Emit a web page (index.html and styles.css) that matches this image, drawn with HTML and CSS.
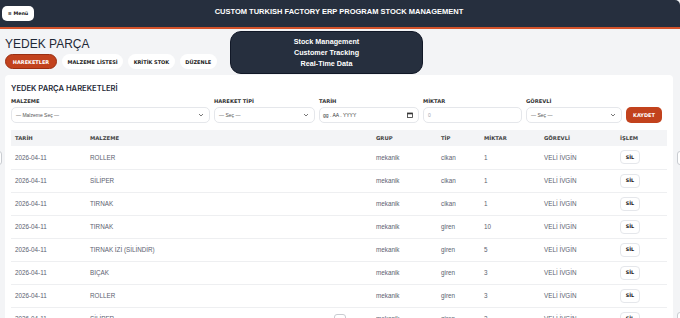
FILE: index.html
```
<!DOCTYPE html>
<html lang="tr">
<head>
<meta charset="utf-8">
<title>Yedek Parça</title>
<link rel="stylesheet" href="styles.css">
</head>
<body>
<header class="topbar">
  <button class="menu-btn">≡ Menü</button>
  <div class="topbar-title">CUSTOM TURKISH FACTORY ERP PROGRAM STOCK MANAGEMENT</div>
</header>
<div class="promo">
  <div>Stock Management</div>
  <div>Customer Tracking</div>
  <div>Real-Time Data</div>
</div>
<span class="edge edge-left"></span>
<span class="edge edge-right"></span>
<span class="edge edge-bottom"></span>
<span class="edge edge-br"></span>
<main class="page">
  <h1 class="page-title">YEDEK PARÇA</h1>
  <nav class="tabs">
    <span class="tab active">HAREKETLER</span>
    <span class="tab">MALZEME LİSTESİ</span>
    <span class="tab">KRİTİK STOK</span>
    <span class="tab">DÜZENLE</span>
  </nav>
  <section class="card">
    <h2 class="card-title">YEDEK PARÇA HAREKETLERİ</h2>
    <div class="form">
      <div class="field">
        <label>MALZEME</label>
        <div class="control"><span>— Malzeme Seç —</span><svg width="6" height="4" viewBox="0 0 6 4"><path d="M1 1l2 2 2-2" fill="none" stroke="#555" stroke-width="0.8"/></svg></div>
      </div>
      <div class="field">
        <label>HAREKET TİPİ</label>
        <div class="control"><span>— Seç —</span><svg width="6" height="4" viewBox="0 0 6 4"><path d="M1 1l2 2 2-2" fill="none" stroke="#555" stroke-width="0.8"/></svg></div>
      </div>
      <div class="field">
        <label>TARİH</label>
        <div class="control date"><span>gg . AA . YYYY</span><svg width="6" height="6" viewBox="0 0 6 6"><rect x="0.5" y="1" width="5" height="4.5" fill="none" stroke="#333" stroke-width="0.8"/><rect x="0.5" y="1" width="5" height="1.3" fill="#333"/></svg></div>
      </div>
      <div class="field">
        <label>MİKTAR</label>
        <div class="control"><span class="ph">0</span></div>
      </div>
      <div class="field">
        <label>GÖREVLİ</label>
        <div class="control"><span>— Seç —</span><svg width="6" height="4" viewBox="0 0 6 4"><path d="M1 1l2 2 2-2" fill="none" stroke="#555" stroke-width="0.8"/></svg></div>
      </div>
      <div class="field action">
        <button class="save">KAYDET</button>
      </div>
    </div>
    <table class="grid">
      <thead>
        <tr><th>TARİH</th><th>MALZEME</th><th>GRUP</th><th>TİP</th><th>MİKTAR</th><th>GÖREVLİ</th><th>İŞLEM</th></tr>
      </thead>
      <tbody>
        <tr><td>2026-04-11</td><td>ROLLER</td><td>mekanik</td><td>cikan</td><td>1</td><td>VELİ İVGİN</td><td><button class="del">SİL</button></td></tr>
        <tr><td>2026-04-11</td><td>SİLİPER</td><td>mekanik</td><td>cikan</td><td>1</td><td>VELİ İVGİN</td><td><button class="del">SİL</button></td></tr>
        <tr><td>2026-04-11</td><td>TIRNAK</td><td>mekanik</td><td>cikan</td><td>1</td><td>VELİ İVGİN</td><td><button class="del">SİL</button></td></tr>
        <tr><td>2026-04-11</td><td>TIRNAK</td><td>mekanik</td><td>giren</td><td>10</td><td>VELİ İVGİN</td><td><button class="del">SİL</button></td></tr>
        <tr><td>2026-04-11</td><td>TIRNAK İZİ (SİLİNDİR)</td><td>mekanik</td><td>giren</td><td>5</td><td>VELİ İVGİN</td><td><button class="del">SİL</button></td></tr>
        <tr><td>2026-04-11</td><td>BIÇAK</td><td>mekanik</td><td>giren</td><td>3</td><td>VELİ İVGİN</td><td><button class="del">SİL</button></td></tr>
        <tr><td>2026-04-11</td><td>ROLLER</td><td>mekanik</td><td>giren</td><td>3</td><td>VELİ İVGİN</td><td><button class="del">SİL</button></td></tr>
        <tr><td>2026-04-11</td><td>SİLİPER</td><td>mekanik</td><td>giren</td><td>3</td><td>VELİ İVGİN</td><td><button class="del">SİL</button></td></tr>
      </tbody>
    </table>
  </section>
</main>
</body>
</html>
```
FILE: styles.css
```
* { box-sizing: border-box; }
html, body { margin: 0; }
body {
  background: #f3f4f6;
  font-family: "Liberation Sans", Arial, sans-serif;
  color: #1f2937;
  height: 318px;
  overflow: hidden;
  position: relative;
}
.topbar {
  height: 29px;
  background: #262f3e;
  border-bottom: 2px solid #d4532b;
  border-top-right-radius: 5px;
  display: flex;
  align-items: center;
  padding: 0 2px;
}
.menu-btn {
  flex: none;
  background: #fff;
  border: none;
  border-radius: 5px;
  height: 15px;
  width: 32px;
  padding: 0;
  font-family: "DejaVu Sans", sans-serif;
  font-weight: 700;
  font-size: 4.8px;
  color: #111;
  margin-top: -1px;
}
.topbar-title {
  flex: 1;
  text-align: center;
  color: #fff;
  font-weight: 700;
  font-size: 7.5px;
  margin-top: -5px;
  padding-right: 34px;
}
.promo {
  position: absolute;
  left: 230px;
  top: 31px;
  width: 193px;
  height: 43px;
  background: #262f3e;
  border: 1px solid #111827;
  border-radius: 11px;
  color: #fff;
  font-weight: 700;
  font-size: 7.2px;
  line-height: 11px;
  text-align: center;
  padding-top: 4px;
  z-index: 2;
}
.edge {
  position: absolute;
  width: 6px;
  height: 14px;
  border: 1px solid #c9ccd1;
  border-radius: 3px;
  background: #fff;
}
.edge-left { left: -4px; top: 151px; }
.edge-right { right: -3px; top: 151px; }
.edge-bottom { left: 334px; top: 314px; width: 12px; height: 10px; }
.edge-br { right: -3px; top: 312px; }
.page { padding: 0 5px; }
.page-title {
  margin: 0;
  font-weight: 400;
  font-size: 12px;
  color: #1f2937;
  padding-top: 9px;
  line-height: 13px;
}
.tabs {
  display: flex;
  gap: 5px;
  margin-top: 3px;
}
.tab {
  height: 15px;
  border-radius: 8px;
  background: #fff;
  font-family: "DejaVu Sans", sans-serif;
  font-weight: 700;
  font-size: 5px;
  color: #222;
  display: flex;
  align-items: center;
  padding: 0 5.5px;
}
.tab.active {
  background: #c2421d;
  color: #fff;
  border: 1px solid #9a2f12;
  width: 52px;
  padding: 0;
  justify-content: center;
}
.card {
  margin-top: 6px;
  width: 668px;
  background: #fff;
  border-radius: 4px;
  padding: 9px 6px 0;
}
.card-title {
  margin: 0;
  font-family: Inter, "Liberation Sans", sans-serif;
  font-weight: 600;
  font-size: 7.6px;
  color: #1f2937;
  line-height: 10px;
}
.form {
  display: grid;
  grid-template-columns: 199px 101px 100px 99px 96px 36px;
  column-gap: 4px;
  margin-top: 4px;
}
.field { display: flex; flex-direction: column; }
.field label {
  font-family: "DejaVu Sans", sans-serif;
  font-weight: 700;
  font-size: 5.2px;
  color: #333;
  height: 9px;
  line-height: 7px;
}
.control {
  height: 16px;
  border: 1px solid #e5e7eb;
  border-radius: 5px;
  display: flex;
  align-items: center;
  justify-content: space-between;
  padding: 0 5px 0 4px;
  font-size: 5px;
  color: #555;
}
.control.date { color: #333; padding-left: 3px; }
.control .ph { color: #9ca3af; }
.field.action { justify-content: flex-end; }
.save {
  height: 16px;
  background: #c2421d;
  color: #fff;
  border: none;
  border-radius: 5px;
  font-family: "DejaVu Sans", sans-serif;
  font-weight: 700;
  font-size: 5px;
  padding: 0;
}
.grid {
  width: 656px;
  margin-top: 7px;
  border-collapse: collapse;
  table-layout: fixed;
}
.grid th:nth-child(1) { width: 75px; }
.grid th:nth-child(2) { width: 286px; }
.grid th:nth-child(3) { width: 65px; }
.grid th:nth-child(4) { width: 43px; }
.grid th:nth-child(5) { width: 60px; }
.grid th:nth-child(6) { width: 76px; }
.grid th:nth-child(7) { width: 51px; }
.grid th {
  background: #f3f4f6;
  height: 16px;
  padding: 0 4px;
  text-align: left;
  font-family: "DejaVu Sans", sans-serif;
  font-weight: 700;
  font-size: 5.3px;
  color: #444;
}
.grid td {
  height: 23px;
  padding: 0 4px;
  font-size: 6.3px;
  color: #5b6170;
  border-bottom: 1px solid #eeeff1;
}
.del {
  width: 20px;
  height: 14px;
  background: #fff;
  border: 1px solid #e5e7eb;
  border-radius: 4px;
  font-family: "DejaVu Sans", sans-serif;
  font-weight: 700;
  font-size: 4.8px;
  color: #111;
  padding: 0;
}
```
